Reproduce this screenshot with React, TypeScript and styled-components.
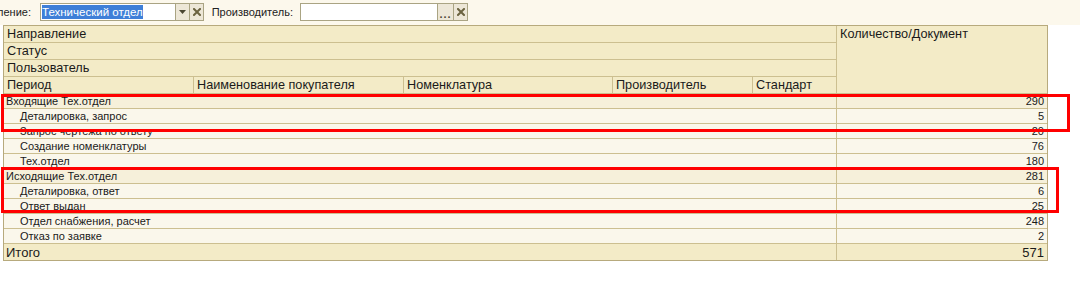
import React from "react";
import styled, { createGlobalStyle } from "styled-components";

const GlobalStyle = createGlobalStyle`
  html, body { margin: 0; padding: 0; background: #ffffff; }
  body { font-family: "Liberation Sans", Arial, sans-serif; color: #111; overflow: hidden; }
`;

const Page = styled.div`
  position: relative;
  width: 1080px;
  height: 289px;
  background: #ffffff;
`;

const TopBar = styled.div`
  height: 25px;
  display: flex;
  align-items: flex-start;
  padding-top: 3px;
  box-sizing: border-box;
  background: #fcf8ec;
  font-size: 11px;
  overflow: hidden;
  white-space: nowrap;
`;

const Label = styled.span<{ $w: number; $gap: number }>`
  width: ${(p) => p.$w}px;
  display: flex;
  justify-content: flex-end;
  overflow: hidden;
  margin-right: ${(p) => p.$gap}px;
  line-height: 18px;
  color: #222;
`;

const Field = styled.div<{ $w: number }>`
  width: ${(p) => p.$w}px;
  height: 18px;
  box-sizing: border-box;
  border: 1px solid #aaa483;
  background: #fff;
  display: flex;
  align-items: center;
  padding-left: 1px;
`;

const Selected = styled.span`
  background: #3e7fd8;
  color: #fff;
  line-height: 14px;
  font-size: 11.5px;
`;

const FieldButton = styled.div<{ $w: number; $last?: boolean }>`
  width: ${(p) => p.$w}px;
  height: 18px;
  box-sizing: border-box;
  border: 1px solid #aaa483;
  border-left: none;
  background: #ede7d7;
  display: flex;
  align-items: center;
  justify-content: center;
  margin-right: ${(p) => (p.$last ? 7 : 0)}px;
  color: #6b6340;
`;

const ReportArea = styled.div`
  padding-left: 3px;
`;

const Grid = styled.div`
  display: grid;
  grid-template-columns: 189px 209px 208px 139px 83px 210px;
  gap: 1px;
  background: #ccbf90;
  border: 1px solid #b7aa7d;
  width: fit-content;
  font-size: 11px;
`;

const HeadCell = styled.div<{ $span?: number; $rows?: number }>`
  grid-column: span ${(p) => p.$span ?? 1};
  grid-row: span ${(p) => p.$rows ?? 1};
  height: ${(p) => (p.$rows ? "auto" : "16px")};
  background: #f3ebc7;
  font-size: 12.7px;
  line-height: 17px;
  padding-left: 3px;
  white-space: nowrap;
  overflow: hidden;
  color: #1a1a1a;
`;

const RowCell = styled.div<{ $kind: "group" | "item" | "total" }>`
  grid-column: span 5;
  height: ${(p) => (p.$kind === "total" ? 16 : 14)}px;
  line-height: ${(p) => (p.$kind === "total" ? 17 : 14)}px;
  font-size: ${(p) => (p.$kind === "total" ? 13 : 11)}px;
  padding-left: ${(p) => (p.$kind === "item" ? 16 : 2)}px;
  background: ${(p) =>
    p.$kind === "total" ? "#f3ebc7" : p.$kind === "group" ? "#f6f0da" : "#faf7eb"};
  white-space: nowrap;
  color: #1a1a1a;
`;

const ValueCell = styled.div<{ $kind: "group" | "item" | "total" }>`
  height: ${(p) => (p.$kind === "total" ? 16 : 14)}px;
  line-height: ${(p) => (p.$kind === "total" ? 17 : 14)}px;
  font-size: ${(p) => (p.$kind === "total" ? 13 : 11)}px;
  text-align: right;
  padding-right: 3px;
  background: ${(p) =>
    p.$kind === "total" ? "#f3ebc7" : p.$kind === "group" ? "#f6f0da" : "#faf7eb"};
  color: #1a1a1a;
`;

const Highlight = styled.div<{ $left: number; $top: number; $w: number; $h: number }>`
  position: absolute;
  left: ${(p) => p.$left}px;
  top: ${(p) => p.$top}px;
  width: ${(p) => p.$w}px;
  height: ${(p) => p.$h}px;
  box-sizing: border-box;
  border: 3px solid #ff0000;
  pointer-events: none;
`;

const Arrow = () => (
  <svg width="7" height="4" viewBox="0 0 7 4">
    <path d="M0 0 H7 L3.5 4 Z" fill="#4a4632" />
  </svg>
);

const Cross = () => (
  <svg width="8" height="8" viewBox="0 0 8 8">
    <path d="M1 1 L7 7 M7 1 L1 7" stroke="#6b6340" strokeWidth="2" strokeLinecap="square" />
  </svg>
);

const Dots = styled.span`
  font-size: 11px;
  line-height: 10px;
  letter-spacing: 1px;
  color: #4a4632;
  font-weight: bold;
  margin-top: 4px;
`;

type Kind = "group" | "item" | "total";
const rows: { name: string; value: number; kind: Kind }[] = [
  { name: "Входящие Тех.отдел", value: 290, kind: "group" },
  { name: "Деталировка, запрос", value: 5, kind: "item" },
  { name: "Запрос чертежа по ответу", value: 20, kind: "item" },
  { name: "Создание номенклатуры", value: 76, kind: "item" },
  { name: "Тех.отдел", value: 180, kind: "item" },
  { name: "Исходящие Тех.отдел", value: 281, kind: "group" },
  { name: "Деталировка, ответ", value: 6, kind: "item" },
  { name: "Ответ выдан", value: 25, kind: "item" },
  { name: "Отдел снабжения, расчет", value: 248, kind: "item" },
  { name: "Отказ по заявке", value: 2, kind: "item" },
  { name: "Итого", value: 571, kind: "total" },
];

export default function App() {
  return (
    <Page>
      <GlobalStyle />
      <TopBar>
        <Label $w={31} $gap={9}>Направление:</Label>
        <Field $w={136}>
          <Selected>Технический отдел</Selected>
        </Field>
        <FieldButton $w={14}>
          <Arrow />
        </FieldButton>
        <FieldButton $w={14} $last>
          <Cross />
        </FieldButton>
        <Label $w={82} $gap={7}>Производитель:</Label>
        <Field $w={138} />
        <FieldButton $w={16}>
          <Dots>...</Dots>
        </FieldButton>
        <FieldButton $w={14} $last>
          <Cross />
        </FieldButton>
      </TopBar>
      <ReportArea>
        <Grid>
          <HeadCell $span={5}>Направление</HeadCell>
          <HeadCell $rows={4}>Количество/Документ</HeadCell>
          <HeadCell $span={5}>Статус</HeadCell>
          <HeadCell $span={5}>Пользователь</HeadCell>
          <HeadCell>Период</HeadCell>
          <HeadCell>Наименование покупателя</HeadCell>
          <HeadCell>Номенклатура</HeadCell>
          <HeadCell>Производитель</HeadCell>
          <HeadCell>Стандарт</HeadCell>
          {rows.map((r) => (
            <React.Fragment key={r.name}>
              <RowCell $kind={r.kind}>{r.name}</RowCell>
              <ValueCell $kind={r.kind}>{r.value}</ValueCell>
            </React.Fragment>
          ))}
        </Grid>
      </ReportArea>
      <Highlight $left={1} $top={94} $w={1069} $h={38} />
      <Highlight $left={1} $top={167} $w={1058} $h={46} />
    </Page>
  );
}
